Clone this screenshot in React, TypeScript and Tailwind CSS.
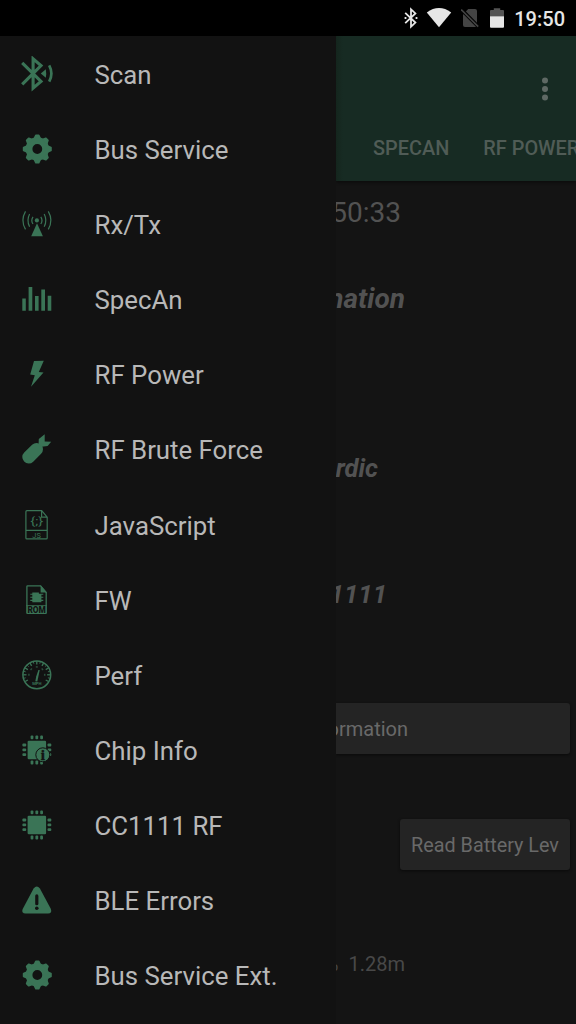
import type { ReactNode } from "react";

const DARK = "#121212";

function Icon({ children }: { children: ReactNode }) {
  return (
    <svg viewBox="0 0 36 36" className="ml-[19px] h-9 w-9 shrink-0 text-[#3a7456]" fill="currentColor">
      {children}
    </svg>
  );
}

const Scan = () => (
  <Icon>
    <g fill="none" stroke="currentColor" strokeWidth="3.1">
      <path d="M3.2 6.8 22 25.4 14.1 32.2V2.8L22 9.6 3.2 28.4" />
      <path d="M30.2 9.3q4.4 8.2 0 16.4" strokeWidth="2.7" />
    </g>
    <path d="M21.8 17.5l5-4.3q.8 4.3 0 8.5z" />
  </Icon>
);

const Gear = () => (
  <Icon>
    <circle cx="18.3" cy="18" r="8.3" fill="none" stroke="currentColor" strokeWidth="6.8" />
    {[0, 45, 90, 135, 180, 225, 270, 315].map((a) => (
      <path key={a} d="M14.2 8l1.9-3.9q.2-.6.8-.6h2.8q.6 0 .8.6L22.4 8z" transform={`rotate(${a} 18.3 18)`} />
    ))}
  </Icon>
);

const Antenna = () => (
  <Icon>
    <circle cx="17.9" cy="14.4" r="2.1" />
    <path d="M18 17.2l5.9 13H12.2z" />
    <g fill="none" stroke="currentColor" strokeWidth="1.2">
      <path d="M6.5 5.4q-5.2 9 0 18M10.6 8q-3.3 6.4 0 12.8M14 10.8q-2.4 3.6 0 7.2M29.3 5.4q5.2 9 0 18M25.2 8q3.3 6.4 0 12.8M21.8 10.8q2.4 3.6 0 7.2" />
    </g>
  </Icon>
);

const Bars = () => (
  <Icon>
    <path d="M3.3 17.4h3.5v12.3H3.3zM9.6 6.1h3.7v23.6H9.6zM16 15.1h3.6v14.6H16zM22.3 8.4H26v21.3h-3.7zM28.7 14.7h3.6v15h-3.6z" />
  </Icon>
);

const Bolt = () => (
  <Icon>
    <path d="M15 4.9l9.8-.2-5 11.2 4.7.5L12 30.8l3.8-11.6-4.6-.7z" />
  </Icon>
);

const Bomb = () => (
  <Icon>
    <path d="M9.7 26.1l7.9-7.8" stroke="currentColor" strokeWidth="12.8" strokeLinecap="round" />
    <path d="M19.8 7.9l5.9-4.6v7.2l6.5.2-3.6 4.4-6 .6-3-3.2z" />
  </Icon>
);

const JsFile = () => (
  <Icon>
    <path d="M7.9 3.7h14.8l5.5 6.5v20.7q0 1-1 1H7.9q-1 0-1-1V4.7q0-1 1-1zM22.6 3.7v6.5h5.6M6.9 23.4h21.3" fill="none" stroke="currentColor" strokeWidth="1.2" />
    <text x="17.7" y="18.2" textAnchor="middle" textLength="13" lengthAdjust="spacingAndGlyphs" fontFamily="Roboto, sans-serif" fontSize="11.5">{"{;}"}</text>
    <text x="17.6" y="30.7" textAnchor="middle" fontFamily="Roboto, sans-serif" fontSize="7.4">JS</text>
  </Icon>
);

const RomFile = () => (
  <Icon>
    <path d="M7.9 24V4.6q0-.7.7-.7h13l5.6 6.7V24" fill="none" stroke="currentColor" strokeWidth="1.3" />
    <path d="M21.6 3.2l6.3 7.3h-6.3zM13.3 10.6h6.6v1.5h2.5v8.1h-9.1zM7.2 23.3h20.7v7.8q0 .8-.8.8H8q-.8 0-.8-.8z" />
    <path d="M11.3 12.2h13M11.3 15.3h13M11.3 18.4h13" stroke="currentColor" strokeWidth="1.1" />
    <text x="17.6" y="30.5" textAnchor="middle" textLength="18.4" lengthAdjust="spacingAndGlyphs" fontFamily="Roboto, sans-serif" fontWeight="900" fontSize="8.6" fill={DARK}>ROM</text>
  </Icon>
);

const Gauge = () => (
  <Icon>
    <g fill="none" stroke="currentColor">
      <circle cx="17.8" cy="17.8" r="13.9" strokeWidth="1.5" />
      {[-120, -90, -60, -30, 0, 30, 60, 90, 120].map((a) => (
        <path key={a} d="M17.8 4.3v3.2" strokeWidth="1.3" transform={`rotate(${a} 17.8 17.8)`} />
      ))}
      {[-105, -75, -45, -15, 15, 45, 75, 105].map((a) => (
        <path key={a} d="M17.8 4.3v2" strokeWidth=".8" transform={`rotate(${a} 17.8 17.8)`} />
      ))}
      {[-90, -45, 0, 45, 90].map((a) => (
        <path key={a} d="M16.8 9.9h2" strokeWidth="1.5" opacity=".6" transform={`rotate(${a} 17.8 17.8)`} />
      ))}
    </g>
    <path d="M19.4 13l1.3.1-1.4 6.7-1 4.7-2 -.3.9-4.7z" />
    <text x="17.8" y="28.2" textAnchor="middle" fontFamily="Roboto, sans-serif" fontWeight="700" fontSize="4.2">MPH</text>
  </Icon>
);

const PINS = [13, 17.8, 22.6];

function ChipBody() {
  return (
    <>
      <rect x="8.6" y="8.7" width="18.5" height="18.5" rx="1.2" />
      {PINS.map((p) => (
        <g key={p}>
          <rect x={p - 1.4} y="3.5" width="2.8" height="3.8" rx="1" />
          <rect x={p - 1.4} y="28.6" width="2.8" height="3.8" rx="1" />
          <rect x="3.4" y={p - 1.4} width="3.8" height="2.8" rx="1" />
          <rect x="28.5" y={p - 1.4} width="3.8" height="2.8" rx="1" />
        </g>
      ))}
    </>
  );
}

const ChipInfo = () => (
  <Icon>
    <ChipBody />
    <circle cx="23.8" cy="22.8" r="7" stroke={DARK} strokeWidth="1" />
    <text x="23.9" y="28" textAnchor="middle" fontFamily="Liberation Serif, serif" fontWeight="700" fontSize="15" fill={DARK} stroke={DARK} strokeWidth=".4">i</text>
  </Icon>
);

const Chip = () => (
  <Icon>
    <ChipBody />
  </Icon>
);

const Warning = () => (
  <Icon>
    <path d="M14.6 6.4q3.2-3.6 6.3 0l11 20.5q1.5 4.3-2.9 4.6H6.6q-4.6-.3-2.9-4.6z" />
    <path d="M17.8 13.9v7.8" stroke={DARK} strokeWidth="3.2" strokeLinecap="round" />
    <circle cx="17.8" cy="26.2" r="1.8" fill={DARK} />
  </Icon>
);

const ITEMS = [
  { label: "Scan", Glyph: Scan },
  { label: "Bus Service", Glyph: Gear },
  { label: "Rx/Tx", Glyph: Antenna },
  { label: "SpecAn", Glyph: Bars },
  { label: "RF Power", Glyph: Bolt },
  { label: "RF Brute Force", Glyph: Bomb },
  { label: "JavaScript", Glyph: JsFile },
  { label: "FW", Glyph: RomFile },
  { label: "Perf", Glyph: Gauge },
  { label: "Chip Info", Glyph: ChipInfo },
  { label: "CC1111 RF", Glyph: Chip },
  { label: "BLE Errors", Glyph: Warning },
  { label: "Bus Service Ext.", Glyph: Gear },
];

function StatusBar() {
  return (
    <header className="flex h-9 shrink-0 items-center justify-end bg-black pr-[11px] text-[#e6e6e6]">
      <svg viewBox="0 0 14 22" className="mr-[8px] h-[22px] w-[14px]" fill="none" stroke="currentColor" strokeWidth="1.8">
        <path d="M1.2 5.8l10.2 9.8L7 19.6V2.4l4.4 4L1.2 16.2" />
        <path d="M.6 11h1.8M11.6 11h1.8" strokeWidth="2" />
      </svg>
      <svg viewBox="0 0 26 20" className="mr-[9px] h-5 w-[26px]" fill="currentColor">
        <path d="M.8 4.4q12.2-8.6 24.4 0L13 19.2z" />
      </svg>
      <svg viewBox="0 0 18 20" className="mr-[11px] h-5 w-[18px]">
        <path d="M7.2 1H14q2 0 2 2v14q0 2-2 2H4q-2 0-2-2V6.5z" fill="#444" />
        <path d="M.2 1.3l17 17.2" stroke="#000" strokeWidth="3.6" />
        <path d="M.2 1.6l17 17" stroke="#444" strokeWidth="1.6" />
      </svg>
      <svg viewBox="0 0 14 20" className="mr-[10px] h-5 w-[14px]">
        <path d="M0 8.2V3.1q0-1 1-1h2.8V.3h6.4v1.8H13q1 0 1 1v5.1z" fill="#545454" />
        <path d="M0 8.2h14v10.5q0 1-1 1H1q-1 0-1-1z" fill="currentColor" />
      </svg>
      <span className="pt-px text-[20px] leading-9 font-medium">19:50</span>
    </header>
  );
}

export default function App() {
  return (
    <div className="flex h-[1024px] w-[576px] flex-col overflow-hidden bg-[#141414] font-[Roboto,sans-serif]">
      <StatusBar />
      <div className="flex min-h-0 flex-1">
        <nav className="w-[336px] shrink-0 bg-[#121212]">
          {ITEMS.map(({ label, Glyph }) => (
            <button key={label} className="flex h-[75.17px] w-full items-center text-left">
              <Glyph />
              <span className="ml-[39.5px] pt-[2px] text-[25.8px] leading-8 whitespace-nowrap text-[#b8b8b8]">{label}</span>
            </button>
          ))}
        </nav>

        <main className="flex w-[240px] shrink-0 flex-col overflow-hidden whitespace-nowrap text-[#525252]">
          <div className="flex h-[145px] shrink-0 flex-col bg-[linear-gradient(90deg,#14251d_0px,#172b23_7px)] shadow-[0_1px_3px_#0a0a0a]">
            <div className="flex h-[89px] items-end justify-end pr-[28px] pb-[24px]">
              <svg viewBox="0 0 6 24" className="h-6 w-[6px]" fill="#5f6964">
                <circle cx="3" cy="3.6" r="3" />
                <circle cx="3" cy="12" r="3" />
                <circle cx="3" cy="20.4" r="3" />
              </svg>
            </div>
            <div className="flex gap-[34px] pt-[9px] pl-[37px] text-[19.9px] leading-[30px] font-medium text-[#505c56]">
              <span>SPECAN</span>
              <span>RF POWER</span>
            </div>
          </div>
          <div className="mt-[14px] flex w-[65px] justify-end overflow-hidden text-[28px] leading-9">19:50:33</div>
          <div className="mt-[50px] flex w-[70px] justify-end overflow-hidden pr-[1px] text-[28px] leading-9 font-bold italic">Information</div>
          <div className="mt-[133px] flex w-[43px] justify-end overflow-hidden pr-[1px] text-[25.6px] leading-9 font-bold italic">Nordic</div>
          <div className="mt-[90px] flex w-[52px] justify-end overflow-hidden pr-[1px] text-[25.8px] leading-9 font-bold italic">CC1111</div>
          <div className="mt-[91px] h-[51px] w-[234px] shrink-0 rounded-r-[3px] bg-[#242424] shadow-[0_1px_3px_#0a0a0a]">
            <div className="flex w-[72px] justify-end overflow-hidden text-[20px] leading-[53px] text-[#696969]">Information</div>
          </div>
          <button className="mt-[65px] mr-[6px] h-[51px] w-[170px] shrink-0 self-end rounded-[3px] bg-[#242424] text-[19.8px] leading-[53px] text-[#696969] shadow-[0_1px_3px_#0a0a0a]">
            Read Battery Lev
          </button>
          <div className="mt-[79px] flex w-[69px] justify-end gap-[10px] overflow-hidden text-[20px] leading-[30px] text-[#484848]">
            <span>%</span>
            <span>1.28m</span>
          </div>
        </main>
      </div>
    </div>
  );
}
